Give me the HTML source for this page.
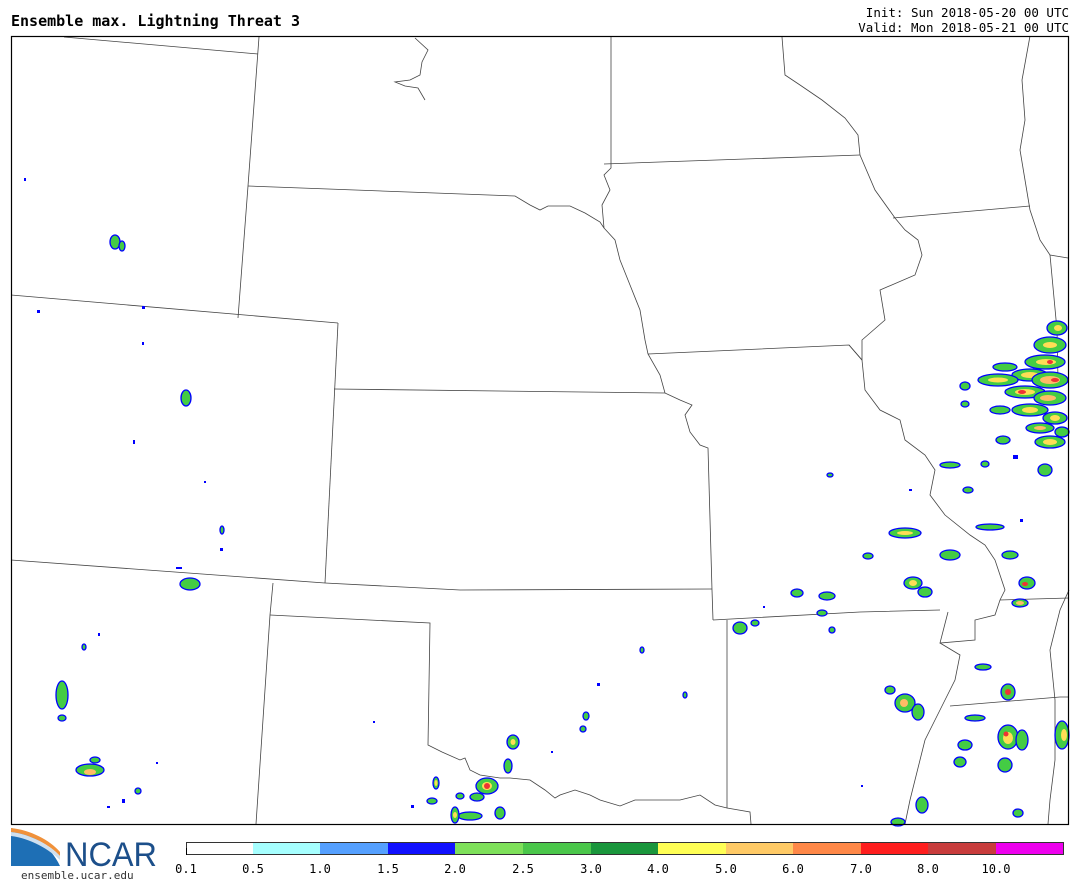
<!DOCTYPE html>
<html><head><meta charset="utf-8">
<style>
html,body{margin:0;padding:0;background:#fff;width:1080px;height:887px;overflow:hidden}
.t{position:absolute;font-family:"Liberation Mono","DejaVu Sans Mono",monospace;color:#000}
</style></head><body>
<div class="t" style="left:11px;top:12px;font-size:15px;font-weight:bold;font-family:'DejaVu Sans Mono','Liberation Mono',monospace;">Ensemble max. Lightning Threat 3</div>
<div class="t" style="right:11px;top:5px;font-size:12.5px;text-align:right;line-height:15px;font-family:'DejaVu Sans Mono','Liberation Mono',monospace;">Init: Sun 2018-05-20 00 UTC<br>Valid: Mon 2018-05-21 00 UTC</div>
<svg width="1080" height="887" style="position:absolute;left:0;top:0" xmlns="http://www.w3.org/2000/svg">
<style>
.s{fill:none;stroke:#444;stroke-width:0.8}
.c{fill:#4c4;stroke:#00f;stroke-width:1.3}
.y{fill:#fd5}
.o{fill:#fb6}
.r{fill:#e33}
.d{fill:#00f}
</style>
<g class="s">
<polyline points="64,37 258,54"/>
<polyline points="259,37 248,186 238,318"/>
<polyline points="11,295 338,323"/>
<polyline points="248,186 515,196 530,205 540,210 548,206 570,206 585,213 600,222 604,228"/>
<polyline points="611,37 611,168 604,175 610,190 602,205 604,228 615,240 620,260 630,285 640,310 645,340 648,354 660,375 665,393"/>
<polyline points="604,164 860,155"/>
<polyline points="782,37 785,75 800,85 822,100 845,118 858,135 860,155 875,190 895,218 905,230 918,240 922,255 915,275 880,290 885,320 862,340 862,360 849,345"/>
<polyline points="648,354 849,345 862,360"/>
<polyline points="862,360 865,390 880,410 900,420 905,440 925,455 935,470 930,495 945,515 970,535 985,545 995,560 1000,575 1005,590 1000,600 995,615 975,620 975,640 940,643 948,612"/>
<polyline points="893,218 1030,206"/>
<polyline points="1030,36 1022,80 1025,120 1020,150 1025,180 1030,210 1040,240 1050,255 1068,258"/>
<polyline points="1050,255 1057,330 1058,380"/>
<polyline points="338,323 325,583"/>
<polyline points="334,389 665,393 680,400 692,405 685,415 690,432 700,445 708,448 712,590 713,620"/>
<polyline points="11,560 325,583 460,590 712,589"/>
<polyline points="273,583 270,615 256,824"/>
<polyline points="270,615 430,623 428,745 442,752 460,760 465,758 470,770 480,775 500,778 510,778 530,780 545,790 555,798 560,795 575,790 590,795 600,800 620,806 635,800 660,800 680,800 700,795 715,805 727,808 727,620"/>
<polyline points="727,808 750,812 751,824"/>
<polyline points="713,620 860,612 940,610"/>
<polyline points="950,706 1060,697 1069,697"/>
<polyline points="1000,600 1069,598"/>
<polyline points="940,643 960,655 955,680 945,700 935,720 925,740 920,760 915,780 910,800 905,824"/>
<polyline points="1069,590 1060,610 1050,650 1055,700 1055,760 1050,800 1048,824"/>
<polyline points="415,38 428,50 422,62 420,75 410,80 395,82 405,86 418,88 425,100"/>
</g>
<g>
<!-- NE cluster -->
<ellipse cx="1057" cy="328" rx="10" ry="7" class="c"/><ellipse cx="1058" cy="328" rx="4" ry="3" class="y"/>
<ellipse cx="1050" cy="345" rx="16" ry="8" class="c"/><ellipse cx="1050" cy="345" rx="7" ry="3" class="y"/>
<ellipse cx="1045" cy="362" rx="20" ry="7" class="c"/><ellipse cx="1046" cy="362" rx="10" ry="3" class="y"/><ellipse cx="1050" cy="362" rx="3" ry="2" class="r"/>
<ellipse cx="1030" cy="375" rx="18" ry="6" class="c"/><ellipse cx="1030" cy="375" rx="9" ry="3" class="y"/>
<ellipse cx="1050" cy="380" rx="18" ry="8" class="c"/><ellipse cx="1050" cy="380" rx="10" ry="4" class="o"/><ellipse cx="1055" cy="380" rx="4" ry="2" class="r"/>
<ellipse cx="1025" cy="392" rx="20" ry="6" class="c"/><ellipse cx="1025" cy="392" rx="10" ry="3" class="y"/><ellipse cx="1022" cy="392" rx="4" ry="2" class="r"/>
<ellipse cx="1050" cy="398" rx="16" ry="7" class="c"/><ellipse cx="1048" cy="398" rx="8" ry="3" class="o"/>
<ellipse cx="1030" cy="410" rx="18" ry="6" class="c"/><ellipse cx="1030" cy="410" rx="8" ry="3" class="y"/>
<ellipse cx="1055" cy="418" rx="12" ry="6" class="c"/><ellipse cx="1055" cy="418" rx="5" ry="3" class="y"/>
<ellipse cx="1040" cy="428" rx="14" ry="5" class="c"/><ellipse cx="1040" cy="428" rx="6" ry="2" class="o"/>
<ellipse cx="1050" cy="442" rx="15" ry="6" class="c"/><ellipse cx="1050" cy="442" rx="7" ry="3" class="y"/>
<ellipse cx="1062" cy="432" rx="7" ry="5" class="c"/>
<ellipse cx="998" cy="380" rx="20" ry="6" class="c"/><ellipse cx="998" cy="380" rx="10" ry="2.5" class="y"/>
<ellipse cx="1005" cy="367" rx="12" ry="4" class="c"/>
<ellipse cx="965" cy="386" rx="5" ry="4" class="c"/>
<ellipse cx="1000" cy="410" rx="10" ry="4" class="c"/>
<ellipse cx="965" cy="404" rx="4" ry="3" class="c"/>
<ellipse cx="1003" cy="440" rx="7" ry="4" class="c"/>
<ellipse cx="950" cy="465" rx="10" ry="3" class="c"/>
<ellipse cx="968" cy="490" rx="5" ry="3" class="c"/>
<ellipse cx="985" cy="464" rx="4" ry="3" class="c"/>
<ellipse cx="1045" cy="470" rx="7" ry="6" class="c"/>
<ellipse cx="990" cy="527" rx="14" ry="3" class="c"/>
<ellipse cx="905" cy="533" rx="16" ry="5" class="c"/><ellipse cx="905" cy="533" rx="8" ry="2" class="y"/>
<ellipse cx="868" cy="556" rx="5" ry="3" class="c"/>
<ellipse cx="950" cy="555" rx="10" ry="5" class="c"/>
<ellipse cx="1010" cy="555" rx="8" ry="4" class="c"/>
<ellipse cx="1027" cy="583" rx="8" ry="6" class="c"/><ellipse cx="1025" cy="584" rx="3" ry="2" class="r"/>
<ellipse cx="1020" cy="603" rx="8" ry="4" class="c"/><ellipse cx="1020" cy="603" rx="4" ry="2" class="o"/>
<ellipse cx="913" cy="583" rx="9" ry="6" class="c"/><ellipse cx="913" cy="583" rx="4" ry="3" class="y"/>
<ellipse cx="925" cy="592" rx="7" ry="5" class="c"/>
<ellipse cx="797" cy="593" rx="6" ry="4" class="c"/>
<ellipse cx="827" cy="596" rx="8" ry="4" class="c"/>
<ellipse cx="822" cy="613" rx="5" ry="3" class="c"/>
<ellipse cx="740" cy="628" rx="7" ry="6" class="c"/>
<ellipse cx="755" cy="623" rx="4" ry="3" class="c"/>
<ellipse cx="905" cy="703" rx="10" ry="9" class="c"/><ellipse cx="904" cy="703" rx="4" ry="4" class="o"/>
<ellipse cx="918" cy="712" rx="6" ry="8" class="c"/>
<ellipse cx="890" cy="690" rx="5" ry="4" class="c"/>
<ellipse cx="1008" cy="692" rx="7" ry="8" class="c"/><ellipse cx="1008" cy="692" rx="3" ry="3" class="r"/>
<ellipse cx="1008" cy="737" rx="10" ry="12" class="c"/><ellipse cx="1008" cy="738" rx="5" ry="6" class="y"/><ellipse cx="1006" cy="734" rx="2.5" ry="2.5" class="r"/>
<ellipse cx="1022" cy="740" rx="6" ry="10" class="c"/>
<ellipse cx="1005" cy="765" rx="7" ry="7" class="c"/>
<ellipse cx="965" cy="745" rx="7" ry="5" class="c"/>
<ellipse cx="975" cy="718" rx="10" ry="3" class="c"/>
<ellipse cx="960" cy="762" rx="6" ry="5" class="c"/>
<ellipse cx="1062" cy="735" rx="7" ry="14" class="c"/><ellipse cx="1064" cy="735" rx="3" ry="6" class="y"/>
<ellipse cx="922" cy="805" rx="6" ry="8" class="c"/>
<ellipse cx="898" cy="822" rx="7" ry="4" class="c"/>
<ellipse cx="1018" cy="813" rx="5" ry="4" class="c"/>
<ellipse cx="983" cy="667" rx="8" ry="3" class="c"/>
<!-- oklahoma/texas -->
<ellipse cx="513" cy="742" rx="6" ry="7" class="c"/><ellipse cx="513" cy="742" rx="2.5" ry="3" class="y"/>
<ellipse cx="508" cy="766" rx="4" ry="7" class="c"/>
<ellipse cx="487" cy="786" rx="11" ry="8" class="c"/><ellipse cx="487" cy="786" rx="5" ry="4" class="y"/><ellipse cx="487" cy="786" rx="3" ry="3" class="r"/>
<ellipse cx="477" cy="797" rx="7" ry="4" class="c"/>
<ellipse cx="436" cy="783" rx="3" ry="6" class="c"/><ellipse cx="436" cy="783" rx="1.5" ry="3" class="y"/>
<ellipse cx="432" cy="801" rx="5" ry="3" class="c"/>
<ellipse cx="470" cy="816" rx="12" ry="4" class="c"/>
<ellipse cx="455" cy="815" rx="4" ry="8" class="c"/><ellipse cx="455" cy="815" rx="2" ry="3" class="y"/>
<ellipse cx="500" cy="813" rx="5" ry="6" class="c"/>
<ellipse cx="460" cy="796" rx="4" ry="3" class="c"/>
<ellipse cx="586" cy="716" rx="3" ry="4" class="c"/>
<ellipse cx="583" cy="729" rx="3" ry="3" class="c"/>
<ellipse cx="642" cy="650" rx="2" ry="3" class="c"/>
<ellipse cx="685" cy="695" rx="2" ry="3" class="c"/>
<!-- west -->
<ellipse cx="62" cy="695" rx="6" ry="14" class="c"/>
<ellipse cx="62" cy="718" rx="4" ry="3" class="c"/>
<ellipse cx="90" cy="770" rx="14" ry="6" class="c"/><ellipse cx="90" cy="772" rx="6" ry="3" class="o"/>
<ellipse cx="95" cy="760" rx="5" ry="3" class="c"/>
<ellipse cx="138" cy="791" rx="3" ry="3" class="c"/>
<ellipse cx="84" cy="647" rx="2" ry="3" class="c"/>
<ellipse cx="186" cy="398" rx="5" ry="8" class="c"/>
<ellipse cx="115" cy="242" rx="5" ry="7" class="c"/>
<ellipse cx="122" cy="246" rx="3" ry="5" class="c"/>
<ellipse cx="190" cy="584" rx="10" ry="6" class="c"/>
<ellipse cx="222" cy="530" rx="2" ry="4" class="c"/>
<ellipse cx="832" cy="630" rx="3" ry="3" class="c"/>
<ellipse cx="830" cy="475" rx="3" ry="2" class="c"/>
</g>
<g class="d">
<rect x="24" y="178" width="2" height="3"/><rect x="37" y="310" width="3" height="3"/><rect x="142" y="306" width="3" height="3"/>
<rect x="133" y="440" width="2" height="4"/><rect x="142" y="342" width="2" height="3"/><rect x="204" y="481" width="2" height="2"/>
<rect x="176" y="567" width="6" height="2"/><rect x="220" y="548" width="3" height="3"/><rect x="98" y="633" width="2" height="3"/>
<rect x="122" y="799" width="3" height="4"/><rect x="156" y="762" width="2" height="2"/><rect x="373" y="721" width="2" height="2"/>
<rect x="551" y="751" width="2" height="2"/><rect x="909" y="489" width="3" height="2"/><rect x="1013" y="455" width="5" height="4"/>
<rect x="1020" y="519" width="3" height="3"/><rect x="861" y="785" width="2" height="2"/><rect x="763" y="606" width="2" height="2"/>
<rect x="107" y="806" width="3" height="2"/><rect x="411" y="805" width="3" height="3"/><rect x="597" y="683" width="3" height="3"/>
</g>
<rect x="11.5" y="36.5" width="1057" height="788" fill="none" stroke="#000" stroke-width="1.2"/>
<!-- NCAR logo -->
<path d="M11,828 C30,832 50,845 60,866 L11,866 Z" fill="#1e6fb5"/>
<path d="M11,828 C30,830 50,840 60,852 L60,856 C50,845 30,834 11,832 Z" fill="#f0913a"/>
<path d="M11,832 C30,834 50,845 60,856 L60,860 C50,850 30,838 11,836 Z" fill="#cfe0ef"/>
<text x="65" y="866" font-family="Liberation Sans,sans-serif" font-size="34" fill="#1c4f8a" textLength="92" lengthAdjust="spacingAndGlyphs">NCAR</text>
<text x="21" y="879" font-family="DejaVu Sans Mono,Liberation Mono,monospace" font-size="11" fill="#333">ensemble.ucar.edu</text>
<g>
<rect x="186.5" y="842.5" width="67" height="12" fill="#fff"/>
<rect x="253" y="842" width="67.5" height="13" fill="#a6ffff"/>
<rect x="320" y="842" width="68" height="13" fill="#55a0ff"/>
<rect x="388" y="842" width="67" height="13" fill="#1010ff"/>
<rect x="455" y="842" width="68" height="13" fill="#7ee05a"/>
<rect x="523" y="842" width="68" height="13" fill="#4ac64a"/>
<rect x="591" y="842" width="67" height="13" fill="#1a963c"/>
<rect x="658" y="842" width="68" height="13" fill="#ffff55"/>
<rect x="726" y="842" width="67" height="13" fill="#ffca66"/>
<rect x="793" y="842" width="68" height="13" fill="#ff8848"/>
<rect x="861" y="842" width="67" height="13" fill="#ff1e1e"/>
<rect x="928" y="842" width="68" height="13" fill="#c83c3c"/>
<rect x="996" y="842" width="68" height="13" fill="#ee00ee"/>
<rect x="186.5" y="842.5" width="877" height="12" fill="none" stroke="#333" stroke-width="1"/>
<line x1="186.5" y1="848" x2="186.5" y2="855" stroke="#000"/>
</g>
<g font-family="DejaVu Sans Mono,Liberation Mono,monospace" font-size="12" fill="#000" text-anchor="middle">
<text x="186" y="873">0.1</text><text x="253" y="873">0.5</text><text x="320" y="873">1.0</text><text x="388" y="873">1.5</text>
<text x="455" y="873">2.0</text><text x="523" y="873">2.5</text><text x="591" y="873">3.0</text><text x="658" y="873">4.0</text>
<text x="726" y="873">5.0</text><text x="793" y="873">6.0</text><text x="861" y="873">7.0</text><text x="928" y="873">8.0</text>
<text x="996" y="873">10.0</text>
</g>
</svg>
</body></html>
